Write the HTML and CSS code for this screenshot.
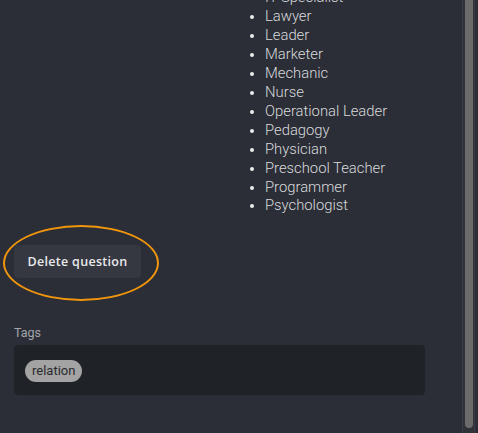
FILE: index.html
```html
<!DOCTYPE html>
<html>
<head>
<meta charset="utf-8">
<link rel="stylesheet" href="styles.css">
</head>
<body>
<div class="frame">
  <main class="content">
    <div class="answers">
      <ul class="list">
        <li>IT Specialist</li>
        <li>Lawyer</li>
        <li>Leader</li>
        <li>Marketer</li>
        <li>Mechanic</li>
        <li>Nurse</li>
        <li>Operational Leader</li>
        <li>Pedagogy</li>
        <li>Physician</li>
        <li>Preschool Teacher</li>
        <li>Programmer</li>
        <li>Psychologist</li>
      </ul>
    </div>
    <div class="actions">
      <button class="delete">Delete question</button>
      <span class="highlight"></span>
    </div>
    <div class="tags">
      <div class="tags-label">Tags</div>
      <div class="tags-box">
        <span class="chip">relation</span>
      </div>
    </div>
  </main>
  <div class="scrollbar"><div class="thumb"></div></div>
</div>
</body>
</html>
```
FILE: styles.css
```css
html, body {
  margin: 0;
  padding: 0;
  background: #2b2e36;
  height: 100%;
  overflow: hidden;
}
.frame {
  display: flex;
  height: 433px;
  width: 478px;
}
.content {
  flex: 1;
  padding: 0 0 0 14px;
  overflow: hidden;
  font-family: Roboto, "Liberation Sans", sans-serif;
}
.answers {
  display: flex;
  justify-content: flex-start;
  padding-left: 222px;
}
.list {
  margin: -12px 0 0 0;
  padding: 0 0 0 29px;
  font-size: 14.8px;
  line-height: 18.95px;
  color: #d9dadd;
  font-weight: 300;
}
.list li::marker {
  color: #ececec;
  font-size: 14px;
}
.actions {
  position: relative;
  margin-top: 30px;
  width: 145px;
}
.delete {
  display: block;
  height: 33px;
  width: 127px;
  border: none;
  border-radius: 4px;
  background: #353841;
  color: #e9e9eb;
  font-family: "Open Sans", "DejaVu Sans", sans-serif;
  font-weight: 600;
  font-size: 12.5px;
  letter-spacing: 0.3px;
  padding: 0;
}
.highlight {
  position: absolute;
  left: -11px;
  top: -20px;
  width: 152px;
  height: 72px;
  border: 2px solid #f0950c;
  border-radius: 50%;
}
.tags {
  margin-top: 48px;
  width: 411px;
}
.tags-label {
  font-size: 12.5px;
  line-height: 14px;
  color: #a2a5ab;
  margin-bottom: 5px;
}
.tags-box {
  background: #1f2227;
  border-radius: 4px;
  height: 50px;
  padding: 0 11px;
  display: flex;
  align-items: center;
}
.chip {
  background: #a3a3a3;
  color: #2a2b2e;
  border-radius: 11px;
  height: 22px;
  line-height: 22px;
  padding: 0 7px;
  font-size: 13px;
  margin-top: 2px;
}
.scrollbar {
  width: 13px;
  margin-right: 3px;
  background: #30323a;
  border-left: 1px solid #3a3c43;
  border-right: 1px solid #3a3c43;
  display: flex;
  justify-content: center;
  box-sizing: border-box;
}
.thumb {
  width: 8px;
  height: 428px;
  background: #6b6b6c;
  border-radius: 0 0 4px 4px;
}
```
